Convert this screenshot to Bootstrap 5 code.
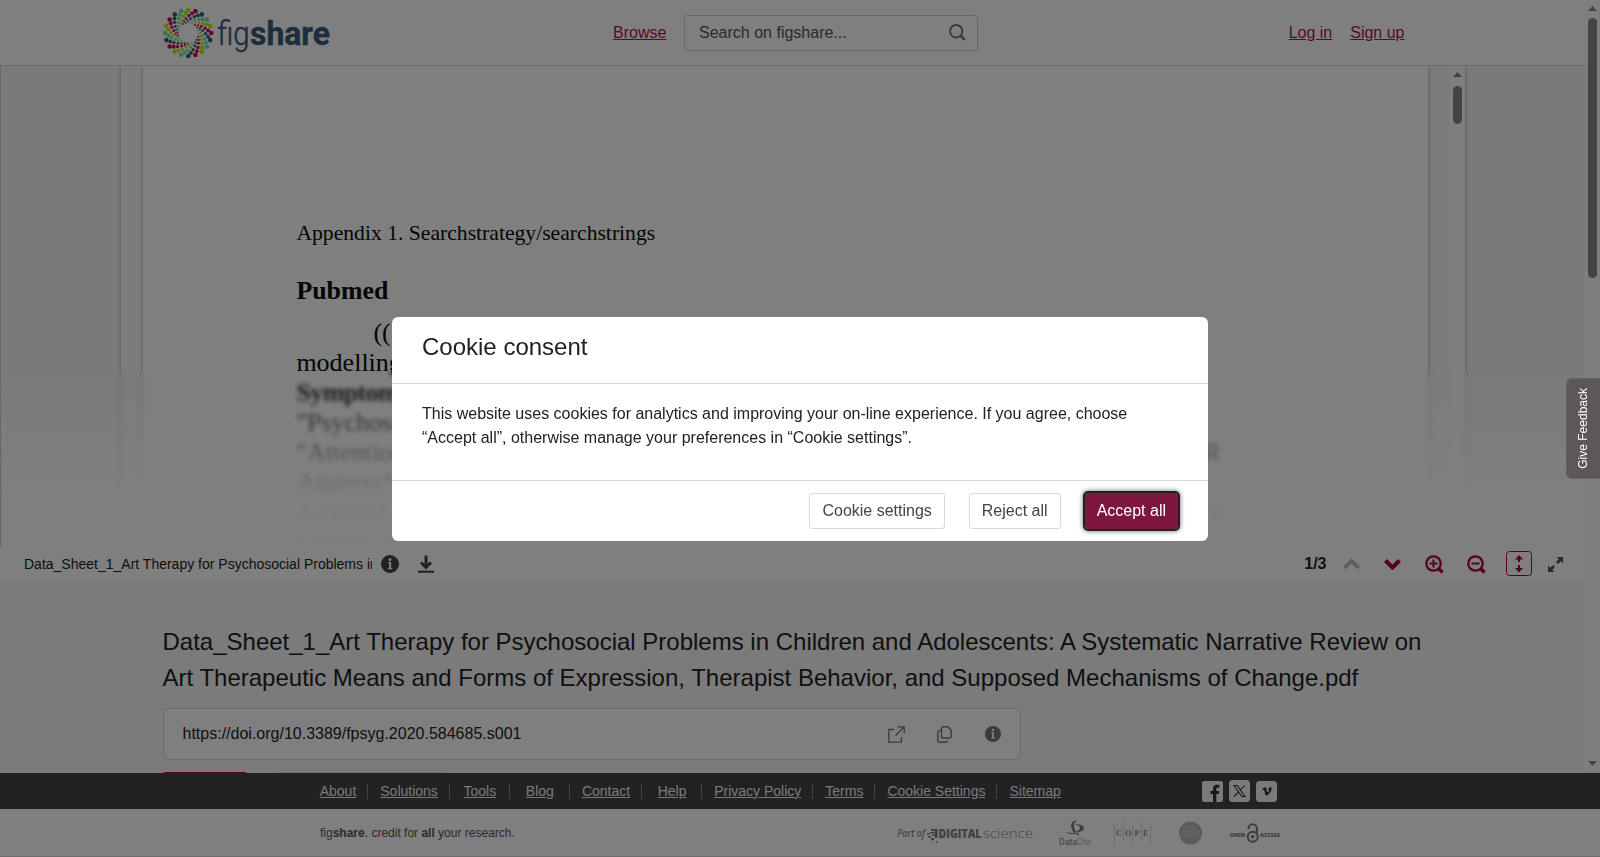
<!DOCTYPE html>
<html lang="en">
<head>
<meta charset="utf-8">
<title>figshare</title>
<link href="https://cdn.jsdelivr.net/npm/bootstrap@5.3.0/dist/css/bootstrap.min.css" rel="stylesheet">
<style>
body{font-family:"Liberation Sans",Arial,sans-serif;font-size:16px;line-height:24px;color:#222;height:100vh;overflow:hidden;background:#fff}
a{color:#b0124a}
svg{display:block;flex:none}
.site-head{height:66px;border-bottom:1px solid #d8d8d8;padding-left:163px;padding-right:180.5px}
.search-box{width:294px;height:36px;border:1px solid #d0d0d0;border-radius:3px;padding:0 11px 0 14.2px;color:#555;margin-left:17.5px}
.sb{width:15px;background:#fcfcfc;flex:none}
.sb .thumb{width:9px;background:#888;border-radius:5px}
.viewer{height:480px;background:#f5f5f5;border-left:1px solid #d0d0d0;padding-left:120px;overflow:hidden}
.frame-doc{width:1344px;height:480px;background:#f8f8f8;box-shadow:0 0 4px rgba(0,0,0,.35)}
.sheet{width:1285px;margin-left:22px;background:#fff;box-shadow:0 0 4px rgba(0,0,0,.35);padding:154px 0 0 153.4px;color:#0a0a0a;font-family:"Liberation Serif","Times New Roman",serif;overflow:hidden}
.doc-a{font-size:21.65px;line-height:26px}
.doc-h{font-size:25.9px;line-height:30px;margin-top:29.5px;font-weight:bold}
.doc-l{font-size:26px;line-height:29.7px;width:924px;white-space:nowrap}
.doc-s{font-weight:bold;letter-spacing:-.6px;padding-top:1px}
.haze{left:1px;right:0;top:306px;bottom:0;backdrop-filter:blur(2px);background:linear-gradient(rgba(255,255,255,.04),rgba(255,255,255,.95) 70%,rgba(255,255,255,.98))}
.tools{height:36px;padding-left:24px;padding-right:22.5px;font-size:14px}
.tools .fname{width:348px;overflow:hidden;white-space:nowrap}
.details{background:#f7f7f7;padding:42px 0 0 163px;overflow:hidden}
.details h1{font-size:24px;line-height:36px;margin:0 0 0 -.5px;width:1280px;color:#222;font-weight:400;white-space:nowrap}
.doi{width:858px;height:52px;border:1px solid #d9d9d9;border-radius:6px;background:#fff;margin-top:12px;padding:0 19px 0 18.5px}
.stub{height:30px;border-radius:3px}
.foot-nav{height:36px;background:#444;padding-left:307.7px;font-size:14px;line-height:21px}
.foot-nav a{color:#f0f0f0}
.foot-nav .it{min-width:60px;padding:0 11px 0 12px;text-align:center;height:15px;line-height:15px;border-right:1.5px solid #888;white-space:nowrap}
.foot-nav .it:first-child{width:60.6px}
.foot-nav .it:last-child{border:0}
.foot-low{height:48px;padding-left:320px;font-size:12px;color:#555;border-bottom:1px solid #ddd}
.feedback{right:0;top:378px;width:34px;height:101px;background:#5c5859;color:#fff;font-size:12px;border-radius:6px 0 0 6px;z-index:1060;border:1px solid #666263;border-right:0}
.feedback span{writing-mode:vertical-rl;transform:rotate(180deg);line-height:14px;margin-right:1px}
.modal-dialog{max-width:816px;margin:317px auto 0}
.modal-content{border:0;border-radius:6px;height:224px;color:#222}
.modal-header{height:67px;padding:0 30px 6px;border-bottom:1px solid #d9d9d9}
.modal-title{font-size:24px;font-weight:400;line-height:30px}
.modal-body{padding:18px 30px}
.modal-footer{height:61px;padding:0 30px;gap:24px;border-top:1px solid #d9d9d9}
.modal-footer>*{margin:0}
.btn-ck{height:36px;border:1px solid #d9d9d9;border-radius:3px;padding:0 12px;color:#444;line-height:24px}
.modal-footer .btn-ok{background:#7d173e;color:#fff;border:0;outline:2px solid #222;box-shadow:0 0 5px 2px rgba(0,0,0,.6)}
</style>
</head>
<body class="d-flex flex-column">
<div class="d-flex flex-fill overflow-hidden" style="min-height:0">
 <div class="flex-fill d-flex flex-column overflow-hidden">
  <header class="site-head d-flex align-items-center flex-shrink-0">
   <svg width="170" height="60" viewBox="0 0 170 60"><g id="burst" transform="translate(25.3 30)"></g>
    <g font-family="Roboto,sans-serif" font-size="34" fill="#3d5b7d" stroke="#3d5b7d"><text x="54.500" y="42" font-weight="300" stroke-width=".6" textLength="32" lengthAdjust="spacingAndGlyphs">fig</text>
    <text x="87" y="42" font-weight="700" stroke-width=".4" textLength="80" lengthAdjust="spacingAndGlyphs">share</text></g></svg>
   <a href="#" style="margin-left:280px">Browse</a>
   <div class="search-box d-flex align-items-center justify-content-between"><span>Search on figshare...</span>
    <svg width="17" height="17" viewBox="0 0 17 17" fill="none" stroke="#777" stroke-width="2"><circle cx="7.200" cy="7.200" r="6.200"/><path d="M11.500 11.500l4.300 4.300" stroke-width="2.600"/></svg></div>
   <div class="ms-auto d-flex" style="gap:18px"><a href="#">Log in</a><a href="#">Sign up</a></div>
  </header>
  <section class="viewer position-relative flex-shrink-0">
   <div class="frame-doc d-flex">
    <div class="sheet">
     <div class="doc-a">Appendix 1. Searchstrategy/searchstrings</div>
     <div class="doc-h">Pubmed</div>
     <div class="doc-l" style="padding-left:77px;margin-top:12.300px">((</div>
     <div class="doc-l">modelling</div>
     <div class="doc-l doc-s">Symptoms</div>
     <div class="doc-l">"Psychosocial</div>
     <div class="doc-l d-flex justify-content-between"><span>"Attention</span><span>R</span></div>
     <div class="doc-l">Aggress*</div>
     <div class="doc-l d-flex justify-content-between" style="width:930px"><span>Anxiety[</span><span>R</span></div>
     <div class="doc-l">Depress*[</div>
    </div>
    <div class="sb d-flex flex-column align-items-center" style="margin-left:22px;padding-top:6px">
     <svg width="9" height="5"><path d="M0 5L4.500 0L9 5z" fill="#888"/></svg><div class="thumb" style="height:38px;margin-top:9px"></div></div>
   </div>
   <div class="haze position-absolute"></div>
  </section>
  <div class="tools d-flex align-items-center flex-shrink-0">
   <div class="fname">Data_Sheet_1_Art Therapy for Psychosocial Problems in Children and Adolescents</div>
   <svg style="margin-left:9px" width="18" height="18" viewBox="0 0 18 18"><circle cx="9" cy="9" r="9" fill="#444"/><circle cx="9" cy="4.400" r="1.500" fill="#fff"/><path d="M7 7h3.200v6h1v1.300H7V13h1V8.300H7z" fill="#fff"/></svg>
   <svg style="margin-left:19px" width="16" height="18" viewBox="0 0 16 18"><path d="M8 .5v12M3 7.500l5 5 5-5" fill="none" stroke="#444" stroke-width="3"/><path d="M0 16.700h16" stroke="#444" stroke-width="2"/></svg>
   <div class="ms-auto fw-bold" style="font-size:16px">1/3</div>
   <svg style="margin-left:16px" width="17" height="12" viewBox="0 0 17 12"><path d="M1.500 10L8.500 3l7 7" fill="none" stroke="#bbb" stroke-width="3.800"/></svg>
   <svg style="margin-left:24.500px" width="17" height="12" viewBox="0 0 17 12"><path d="M1.500 2.500L8.500 9.500l7-7" fill="none" stroke="#b0003f" stroke-width="4.200"/></svg>
   <svg style="margin-left:24px" width="19" height="19" viewBox="0 0 19 19" fill="none" stroke="#b0003f" stroke-width="2.300"><circle cx="8.500" cy="8.500" r="7.200"/><path d="M13.500 13.500l4 4" stroke-width="3.600"/><path d="M8.500 4.500v8M4.500 8.500h8" stroke-width="2"/></svg>
   <svg style="margin-left:23px" width="19" height="19" viewBox="0 0 19 19" fill="none" stroke="#b0003f" stroke-width="2.300"><circle cx="8.500" cy="8.500" r="7.200"/><path d="M13.500 13.500l4 4" stroke-width="3.600"/><path d="M4.500 8.500h8" stroke-width="2"/></svg>
   <svg style="margin-left:19.500px;margin-top:-1px" width="26" height="25" viewBox="0 0 26 25"><rect x=".5" y=".5" width="25" height="24" rx="3" fill="none" stroke="#b0003f"/><path d="M13 4l4 4.500H9zM13 21.500l4-4.500H9zM12 8h2v3h-2zM12 14h2v3h-2z" fill="#b0003f"/></svg>
   <svg style="margin-left:16px" width="15" height="15" viewBox="0 0 15 15"><path d="M8.500 0H15v6.500l-2.200-2.200L10 7 8 5l2.700-2.800zM6.500 15H0V8.500l2.200 2.200L5 8l2 2-2.700 2.800z" fill="#555"/></svg>
  </div>
  <section class="details flex-fill">
   <h1>Data_Sheet_1_Art Therapy for Psychosocial Problems in Children and Adolescents: A Systematic Narrative Review on<br>Art Therapeutic Means and Forms of Expression, Therapist Behavior, and Supposed Mechanisms of Change.pdf</h1>
   <div class="doi d-flex align-items-center"><span class="me-auto">https://doi.org/10.3389/fpsyg.2020.584685.s001</span>
    <svg width="17" height="17" viewBox="0 0 17 17" fill="none" stroke="#777" stroke-width="1.300"><path d="M6 3.500H.8v12.700h12.700V11M9.500 .8h6.700v6.700M16 1L7.500 9.500"/></svg>
    <svg style="margin-left:32px" width="15" height="17" viewBox="0 0 15 17" fill="none" stroke="#777" stroke-width="1.400"><path d="M6 .7h4.700l3.500 3.500v6.300a1.500 1.500 0 0 1-1.500 1.500H6a1.500 1.500 0 0 1-1.500-1.500V2.200A1.500 1.500 0 0 1 6 .7zM3.500 4.500C1.500 4.500 .8 5.300 .8 7v7.500A1.700 1.700 0 0 0 2.500 16.200H8c1.700 0 2.500-.7 2.500-1.700"/></svg>
    <svg style="margin-left:32.800px" width="16" height="16" viewBox="0 0 18 18"><circle cx="9" cy="9" r="9" fill="#777"/><circle cx="9" cy="4.400" r="1.400" fill="#fff"/><path d="M7 7h3v6h1v1.300H7V13h1V8.300H7z" fill="#fff"/></svg>
   </div>
   <div class="d-flex" style="margin-top:12px"><div class="stub" style="width:84px;background:#b0003f"></div><div class="stub border" style="width:172px;margin-left:30px"></div></div>
  </section>
 </div>
 <div class="sb d-flex flex-column align-items-center" style="padding:6px 0 7px"><svg width="9" height="5"><path d="M0 5L4.500 0L9 5z" fill="#888"/></svg><div class="thumb" style="height:260px;margin-top:7px"></div><svg class="mt-auto" width="9" height="5"><path d="M0 0L4.500 5L9 0z" fill="#888"/></svg></div>
</div>
<footer class="flex-shrink-0">
 <div class="foot-nav d-flex align-items-center">
  <div class="d-flex"><div class="it"><a href="#">About</a></div><div class="it"><a href="#">Solutions</a></div><div class="it"><a href="#">Tools</a></div><div class="it"><a href="#">Blog</a></div><div class="it"><a href="#">Contact</a></div><div class="it"><a href="#">Help</a></div><div class="it"><a href="#">Privacy Policy</a></div><div class="it"><a href="#">Terms</a></div><div class="it"><a href="#">Cookie Settings</a></div><div class="it"><a href="#">Sitemap</a></div></div>
  <div class="ms-auto d-flex" style="gap:6px;margin-right:323px">
   <svg width="21" height="21" viewBox="0 0 21 21"><rect width="21" height="21" rx="2.500" fill="#f4f4f4"/><path d="M11 21v-8H8.500v-3H11V8c0-3 1.500-4.300 4-4.300h2.300v3H15.600c-1 0-1.300.5-1.300 1.400V10h3l-.4 3h-2.600v8z" fill="#333"/></svg>
   <svg width="21" height="22" viewBox="0 0 21 22" style="margin-top:-1px"><rect width="21" height="22" rx="3.500" fill="#f4f4f4"/><path d="M5 5.500h3.200l7.800 11h-3.200zM15.500 5.500l-4.600 5M9.800 11.700L5 16.500" fill="none" stroke="#333" stroke-width="1.100"/></svg>
   <svg width="21" height="21" viewBox="0 0 21 21"><rect width="21" height="21" rx="3.500" fill="#f4f4f4"/><path d="M6 8.300l2.700-2c1.300-.5 1.700.7 2 2.600.3 1.700.7 2.500 1 2.500.5 0 1.500-1.700 1.300-2.400-.1-.5-.6-.5-1.100-.3.6-2 2-2.800 3.100-2.400 1.600.7.200 3.600-1.200 5.500-1.300 1.700-2.500 2.800-3.500 2.600-1.200-.3-1.500-3.300-2-5.200-.2-.8-.5-.5-1.500.1z" fill="#333"/></svg>
  </div>
 </div>
 <div class="foot-low d-flex align-items-center"><span>fig<b>share</b>. credit for <b>all</b> your research.</span>
  <svg class="ms-auto" style="margin-right:318px" width="386" height="30" viewBox="896 818 386 30" fill="#999">
   <g font-family="'Open Sans',sans-serif"><text x="897" y="837" font-size="10" font-style="italic" font-weight="600" textLength="28" lengthAdjust="spacingAndGlyphs" fill="#909090">Part of</text>
   <text x="938.500" y="837.500" font-size="12" font-weight="800" textLength="43" lengthAdjust="spacingAndGlyphs" fill="#808080">DIGITAL</text><text x="983" y="837.500" font-size="13.500" font-weight="300" textLength="50" lengthAdjust="spacingAndGlyphs" fill="#888">science</text></g>
   <path d="M931 829h6.500v9h-2.500v-2h-3v-1.500h3v-1h-5V832h5v-1h-4zM927 833h3v1.500h-3zM928 836h3v1.500h-3zM931 838h3v2h-3zM936 841h1.500v1.500H936zM932 841h1v1h-1z" fill="#808080"/>
   <path d="M1077 821c-5-1-7 3-5 8 1 4 4 6 8 6-3-2-6-5-6-9 0-3 1-4 3-5zM1075 824c4 0 8 1 9 4 0 3-4 4-9 5 2-2 5-3 5-5s-3-3-5-4zM1066 832c4 1 8 2 12 0-3 3-8 3-12 0z" fill="#7d7d7d"/>
   <g font-family="Roboto,sans-serif" font-size="9.500"><text x="1059" y="844.800" textLength="18" lengthAdjust="spacingAndGlyphs" fill="#7d7d7d">Data</text><text x="1077" y="844.800" textLength="14" lengthAdjust="spacingAndGlyphs" font-weight="300">Cite</text></g>
   <path d="M1114.500 825v20M1123.500 821v20M1132.500 825v20M1141.500 821v20M1150.500 825v20" stroke="#d8d8d8"/>
   <g font-family="'Liberation Serif',serif" font-size="8" font-weight="700" fill="#8f8f8f"><text x="1116" y="836">C</text><text x="1125" y="836">O</text><text x="1134.500" y="836">P</text><text x="1143" y="836">E</text></g>
   <circle cx="1190.500" cy="833" r="11.500" fill="#b8b8b8"/>
   <g font-family="'Liberation Sans',sans-serif" font-size="4" font-weight="700" fill="#d5d5d5" text-anchor="middle"><text x="1190.500" y="828.500">OPEN</text><text x="1190.500" y="832.500">CITATION</text><text x="1190.500" y="836.500">BODY</text></g>
   <g font-family="'Open Sans',sans-serif" font-size="5.500" font-weight="800" fill="#7c7c7c"><text x="1230" y="836.500" textLength="15">OPEN</text><text x="1260" y="836.500" textLength="20">ACCESS</text></g>
   <g fill="none" stroke="#7c7c7c" stroke-width="2.100"><circle cx="1252.700" cy="836.700" r="5"/><path d="M1248.500 829v-.5a4.200 4.200 0 0 1 8.400 0v5"/></g><circle cx="1252.700" cy="836.700" r="1.800" fill="#7c7c7c"/>
  </svg>
 </div>
</footer>
<div class="modal-backdrop show"></div>
<div class="modal d-block overflow-hidden" tabindex="-1" role="dialog">
 <div class="modal-dialog"><div class="modal-content">
  <div class="modal-header d-flex align-items-center"><h2 class="modal-title">Cookie consent</h2></div>
  <div class="modal-body">This website uses cookies for analytics and improving your on-line experience. If you agree, choose “Accept all”, otherwise manage your preferences in “Cookie settings”.</div>
  <div class="modal-footer flex-nowrap"><button class="btn btn-ck">Cookie settings</button><button class="btn btn-ck">Reject all</button><button class="btn btn-ck btn-ok">Accept all</button></div>
 </div></div>
</div>
<div class="feedback position-fixed d-flex align-items-center justify-content-center"><span>Give Feedback</span></div>
<script src="https://cdn.jsdelivr.net/npm/bootstrap@5.3.0/dist/js/bootstrap.bundle.min.js"></script>
<script>
// Logo burst: 20 curled spokes of shrinking dots in four repeating colours
(function(){
 var c=['#b4f000','#cc0055','#3d5b7d','#66e6b0'],r=[23,20,17.4,14.6,12.4,10.5],a=[0,-7.5,-16,-27,-38,-50],d=[2.3,1.9,1.65,1.4,1.15,1],s='';
 for(var i=0;i<20;i++)for(var k=0;k<6;k++){var t=(i*18+a[k])*Math.PI/180;
  s+='<circle cx="'+(r[k]*Math.sin(t)).toFixed(2)+'" cy="'+(-r[k]*Math.cos(t)).toFixed(2)+'" r="'+d[k]+'" fill="'+c[i%4]+'"/>';}
 document.getElementById('burst').innerHTML=s;
})();
</script>
</body>
</html>
